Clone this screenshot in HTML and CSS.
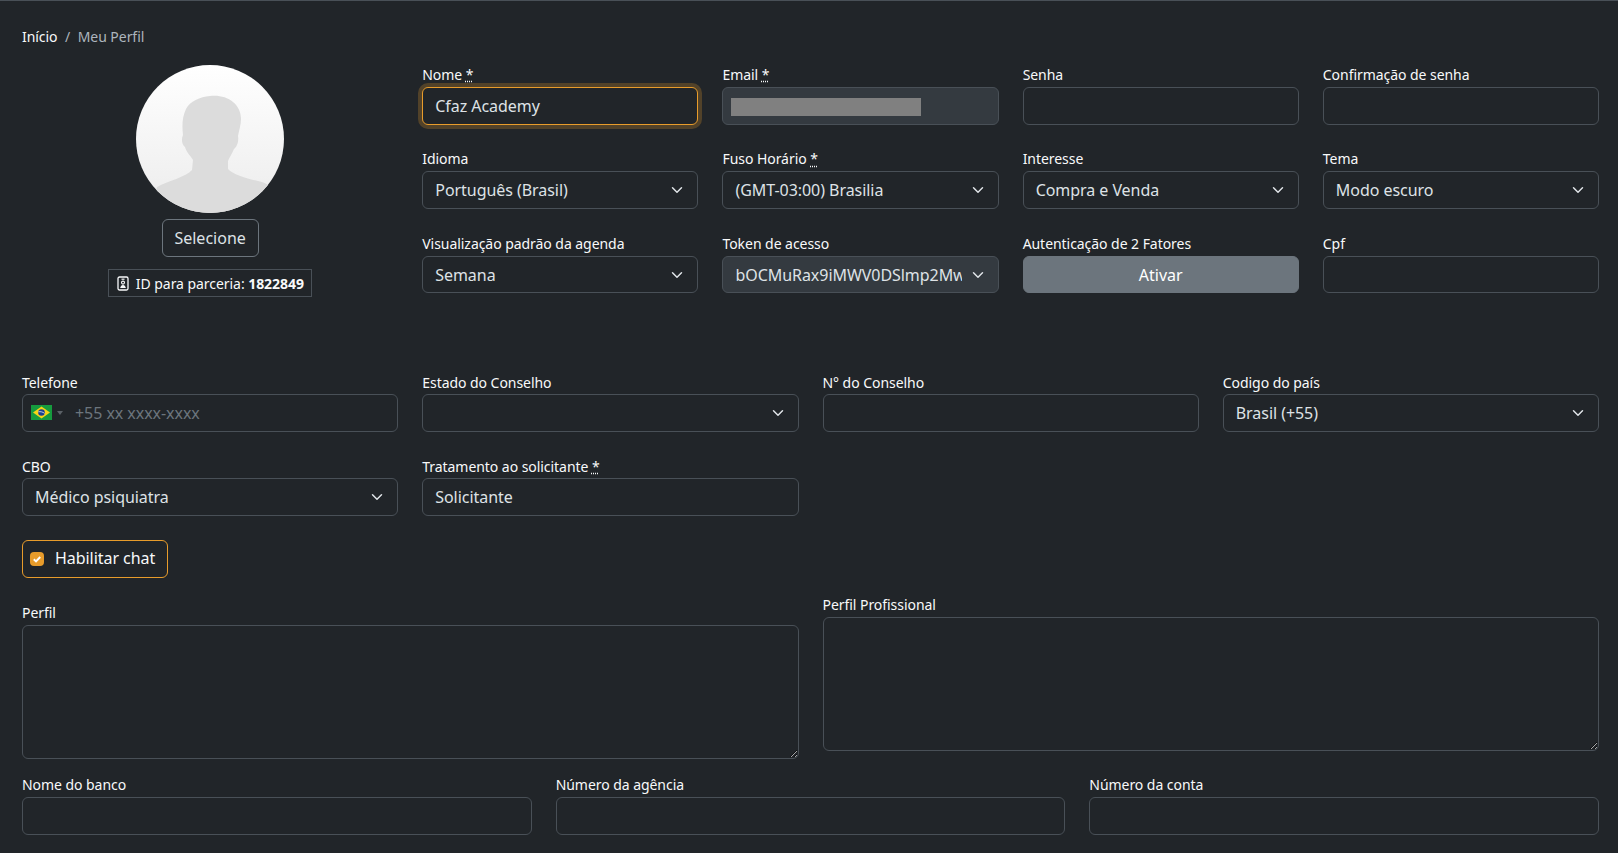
FILE: index.html
```html
<!DOCTYPE html>
<html lang="pt-BR">
<head>
  <meta charset="UTF-8" />
  <meta name="viewport" content="width=device-width, initial-scale=1.0"/>
  <title>Meu Perfil</title>
  <link rel="stylesheet" href="styles.css">
</head>
<body>

  <main class="page">
    <nav class="breadcrumb">
      <a href="#">Início</a>
      <span class="sep">/</span>
      <span class="current">Meu Perfil</span>
    </nav>

    <section class="top">
      <div class="avatar-col">
        <svg class="avatar" viewBox="0 0 148 148" width="148" height="148">
          <defs>
            <linearGradient id="avatar-bg" x1="0" y1="0" x2="0" y2="1">
              <stop offset="0" stop-color="#ffffff"/>
              <stop offset="1" stop-color="#ececec"/>
            </linearGradient>
            <clipPath id="avatar-clip"><circle cx="74" cy="74" r="74"/></clipPath>
          </defs>
          <circle cx="74" cy="74" r="74" fill="url(#avatar-bg)"/>
          <path clip-path="url(#avatar-clip)" fill="#dcdcdc" d="M74 31 C90 29 105 38 105 54 C105 60 103 65 102 71 C103 76 101 82 98 84 C96 89 93 93 92 96 L92 104 C96 109 112 114 122 116 C126 117 130 118 133 121 L133 148 L14 148 L21 122 C32 116 50 112 56 105 L57 95 C55 91 50 87 49 82 C46 80 45 74 47 70 C46 62 46 52 50 44 C54 36 64 32 74 31 Z"/>
        </svg>
        <button class="btn-outline" type="button">Selecione</button>
        <div class="partner-id">
          <svg class="badge-icon" viewBox="0 0 12 15" width="12" height="15">
            <rect x="1" y="1" width="10" height="13" rx="1.5" fill="none" stroke="#f8f9fa" stroke-width="1.3"/>
            <path d="M4.5 3.2h3" stroke="#f8f9fa" stroke-width="1.2"/>
            <circle cx="6" cy="6.6" r="1.5" fill="none" stroke="#f8f9fa" stroke-width="1.1"/>
            <path d="M3.2 12c.4-2 1.4-3 2.8-3s2.4 1 2.8 3z" fill="#f8f9fa"/>
          </svg>
          <span>ID para parceria: <strong>1822849</strong></span>
        </div>
      </div>

      <div class="grid-4 top-fields">
        <div class="field">
          <label>Nome <abbr title="obrigatório">*</abbr></label>
          <input class="control focused" type="text" value="Cfaz Academy">
        </div>
        <div class="field">
          <label>Email <abbr title="obrigatório">*</abbr></label>
          <div class="control disabled"><span class="redacted"></span></div>
        </div>
        <div class="field">
          <label>Senha</label>
          <input class="control" type="password">
        </div>
        <div class="field">
          <label>Confirmação de senha</label>
          <input class="control" type="password">
        </div>

        <div class="field">
          <label>Idioma</label>
          <select class="control select"><option>Português (Brasil)</option></select>
        </div>
        <div class="field">
          <label>Fuso Horário <abbr title="obrigatório">*</abbr></label>
          <select class="control select"><option>(GMT-03:00) Brasilia</option></select>
        </div>
        <div class="field">
          <label>Interesse</label>
          <select class="control select"><option>Compra e Venda</option></select>
        </div>
        <div class="field">
          <label>Tema</label>
          <select class="control select"><option>Modo escuro</option></select>
        </div>

        <div class="field">
          <label>Visualização padrão da agenda</label>
          <select class="control select"><option>Semana</option></select>
        </div>
        <div class="field">
          <label>Token de acesso</label>
          <select class="control select disabled"><option>bOCMuRax9iMWV0DSlmp2MwQ7xT4kZp</option></select>
        </div>
        <div class="field">
          <label>Autenticação de 2 Fatores</label>
          <button class="btn-secondary" type="button">Ativar</button>
        </div>
        <div class="field">
          <label>Cpf</label>
          <input class="control" type="text">
        </div>
      </div>
    </section>

    <section class="grid-4 contact">
      <div class="field">
        <label>Telefone</label>
        <div class="control phone">
          <svg class="flag" viewBox="0 0 21 15" width="21" height="15">
            <rect width="21" height="15" fill="#169b3e"/>
            <path d="M10.5 1.6 19 7.5 10.5 13.4 2 7.5z" fill="#f7d417"/>
            <circle cx="10.5" cy="7.5" r="3.3" fill="#1c3f8f"/>
            <path d="M7.4 6.8c2-.4 4.4.1 6.1 1.5" stroke="#fff" stroke-width=".7" fill="none"/>
          </svg>
          <span class="caret"></span>
          <span class="placeholder">+55 xx xxxx-xxxx</span>
        </div>
      </div>
      <div class="field">
        <label>Estado do Conselho</label>
        <select class="control select"><option></option></select>
      </div>
      <div class="field">
        <label>N° do Conselho</label>
        <input class="control" type="text">
      </div>
      <div class="field">
        <label>Codigo do país</label>
        <select class="control select"><option>Brasil (+55)</option></select>
      </div>
      <div class="field">
        <label>CBO</label>
        <select class="control select"><option>Médico psiquiatra</option></select>
      </div>
      <div class="field">
        <label>Tratamento ao solicitante <abbr title="obrigatório">*</abbr></label>
        <input class="control" type="text" value="Solicitante">
      </div>
    </section>

    <div class="chat-toggle">
      <span class="check">
        <svg viewBox="0 0 14 14" width="14" height="14"><path d="M3.8 7.3 6 9.4l4.2-4.4" fill="none" stroke="#fff" stroke-width="2"/></svg>
      </span>
      <span>Habilitar chat</span>
    </div>

    <section class="profiles">
      <div class="field profile-main">
        <label>Perfil</label>
        <textarea class="control area"></textarea>
      </div>
      <div class="field">
        <label>Perfil Profissional</label>
        <textarea class="control area"></textarea>
      </div>
    </section>

    <section class="grid-3">
      <div class="field">
        <label>Nome do banco</label>
        <input class="control" type="text">
      </div>
      <div class="field">
        <label>Número da agência</label>
        <input class="control" type="text">
      </div>
      <div class="field">
        <label>Número da conta</label>
        <input class="control" type="text">
      </div>
    </section>
  </main>

</body>
</html>
```

FILE: styles.css
```css
html, body {
  margin: 0;
  padding: 0;
  height: 853px;
  overflow: hidden;
  background: #212529;
  color: #dee2e6;
  font-family: "Noto Sans", sans-serif;
  font-size: 14px;
  line-height: 21px;
  letter-spacing: -0.05px;
}

.page {
  border-top: 1px solid #495057;
  padding: 0 19px 0 22px;
}

.breadcrumb {
  display: flex;
  gap: 7.5px;
  padding-top: 25px;
  height: 38px;
}

.breadcrumb a {
  color: #f8f9fa;
  text-decoration: none;
}

.breadcrumb .sep,
.breadcrumb .current {
  color: #adb5bd;
}

.top {
  display: grid;
  grid-template-columns: 376.25px 1fr;
  column-gap: 24px;
  align-items: start;
}

.avatar-col {
  display: flex;
  flex-direction: column;
  align-items: center;
  padding-top: 1px;
}

.avatar {
  display: block;
}

.btn-outline {
  margin-top: 6px;
  height: 38px;
  width: 97px;
  padding: 0;
  background: transparent;
  border: 1px solid #6c757d;
  border-radius: 6px;
  color: #dee2e6;
  font: inherit;
  font-size: 16px;
}

.partner-id {
  margin-top: 12px;
  height: 28px;
  padding: 0 7px 0 8px;
  box-sizing: border-box;
  display: flex;
  align-items: center;
  gap: 6.5px;
  border: 1px solid #495057;
  color: #f8f9fa;
}

.partner-id strong {
  font-weight: 700;
}

.badge-icon {
  flex: none;
}

.grid-4 {
  display: grid;
  grid-template-columns: repeat(4, 1fr);
  column-gap: 24px;
  row-gap: 23.8px;
}

.grid-3 {
  display: grid;
  grid-template-columns: repeat(3, 1fr);
  column-gap: 24px;
  margin-top: 15.4px;
}

.contact {
  margin-top: 75px;
  row-gap: 24.7px;
}

.field {
  min-width: 0;
}

.field label {
  display: block;
  height: 21px;
  margin-bottom: 2px;
  color: #f8f9fa;
}

.contact .field label {
  margin-bottom: 1px;
}

abbr {
  text-decoration: underline dotted;
  cursor: help;
}

.control {
  display: block;
  width: 100%;
  height: 37.6px;
  box-sizing: border-box;
  padding: 6px 12px;
  background-color: #212529;
  border: 1px solid #495057;
  border-radius: 6px;
  color: #dee2e6;
  font-family: inherit;
  font-size: 16px;
  line-height: 24px;
  letter-spacing: -0.05px;
  outline: none;
}

.control.focused {
  border-color: #e89c2b;
  box-shadow: 0 0 0 4px rgba(232, 156, 43, 0.25);
}

.control.disabled {
  background-color: #343a40;
}

.redacted {
  display: block;
  width: 190px;
  height: 17.5px;
  margin: 4px 0 0 -4px;
  background: #808080;
}

.select {
  appearance: none;
  padding-right: 36px;
  background-image: url("data:image/svg+xml,%3csvg xmlns='http://www.w3.org/2000/svg' viewBox='0 0 16 16'%3e%3cpath fill='none' stroke='%23dee2e6' stroke-linecap='round' stroke-linejoin='round' stroke-width='2' d='m2 5 6 6 6-6'/%3e%3c/svg%3e");
  background-repeat: no-repeat;
  background-position: right 12px center;
  background-size: 16px 12px;
}

.btn-secondary {
  display: block;
  width: 100%;
  height: 37.6px;
  background: #6c757d;
  border: 1px solid #6c757d;
  border-radius: 6px;
  color: #fff;
  font-family: inherit;
  font-size: 16px;
}

.phone {
  display: flex;
  align-items: center;
  padding-left: 8px;
}

.flag {
  flex: none;
}

.caret {
  margin-left: 5px;
  border-left: 3px solid transparent;
  border-right: 3px solid transparent;
  border-top: 4px solid #5b6167;
}

.placeholder {
  margin-left: 12px;
  color: #6c757d;
}

.chat-toggle {
  margin-top: 24.1px;
  width: 146px;
  height: 37.7px;
  box-sizing: border-box;
  display: flex;
  align-items: center;
  gap: 11px;
  padding-left: 7px;
  border: 1px solid #e89c2b;
  border-radius: 6px;
  color: #f8f9fa;
  font-size: 16px;
}

.check {
  display: block;
  width: 14px;
  height: 14px;
  background: #e89c2b;
  border-radius: 4px;
}

.check svg {
  display: block;
}

.profiles {
  display: grid;
  grid-template-columns: 1fr 1fr;
  column-gap: 24px;
  margin-top: 16.6px;
  align-items: start;
}

.profile-main {
  padding-top: 8px;
}

.area {
  height: 133.3px;
  resize: vertical;
}
```
